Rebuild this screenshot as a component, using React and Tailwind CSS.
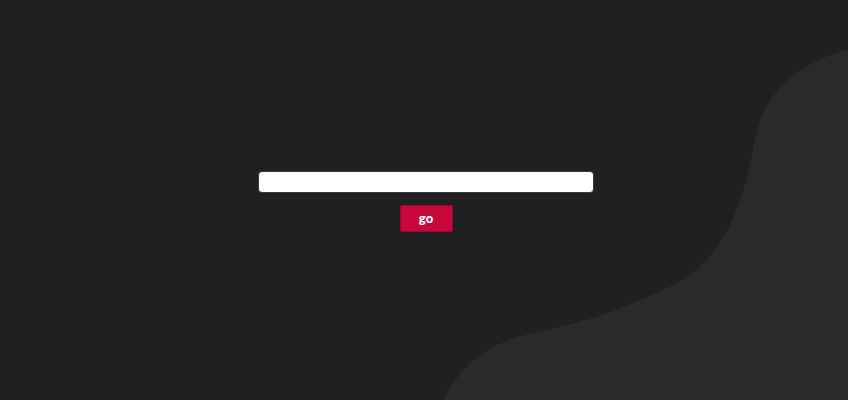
import React from 'react';

function Wave() {
  return (
    <svg
      className="absolute inset-0 h-full w-full"
      viewBox="0 0 848 400"
      preserveAspectRatio="none"
      aria-hidden="true"
    >
      <path
        d="M848,50 C810,58 775,85 763,113 C752,140 752,170 740,200 C725,245 700,275 663,290 C630,305 600,318 547,330 C505,338 470,350 443,400 L848,400 Z"
        fill="#2a292c"
      />
    </svg>
  );
}

export default function App() {
  return (
    <div className="relative h-[400px] w-full overflow-hidden bg-[#201f22] font-['Lato',sans-serif]">
      <Wave />
      <div className="relative flex h-full flex-col items-center pl-[4px] pt-[171px]">
        <input
          type="text"
          className="h-[22px] w-[336px] rounded-[4px] border border-[#3a393c] bg-white px-2 text-sm text-black outline-none"
        />
        <button
          type="button"
          className="mt-[12px] h-[27px] w-[53px] rounded-[2px] border border-[#9c0830] bg-[#c8073c] text-[13px] font-black leading-none text-white"
        >
          go
        </button>
      </div>
    </div>
  );
}
